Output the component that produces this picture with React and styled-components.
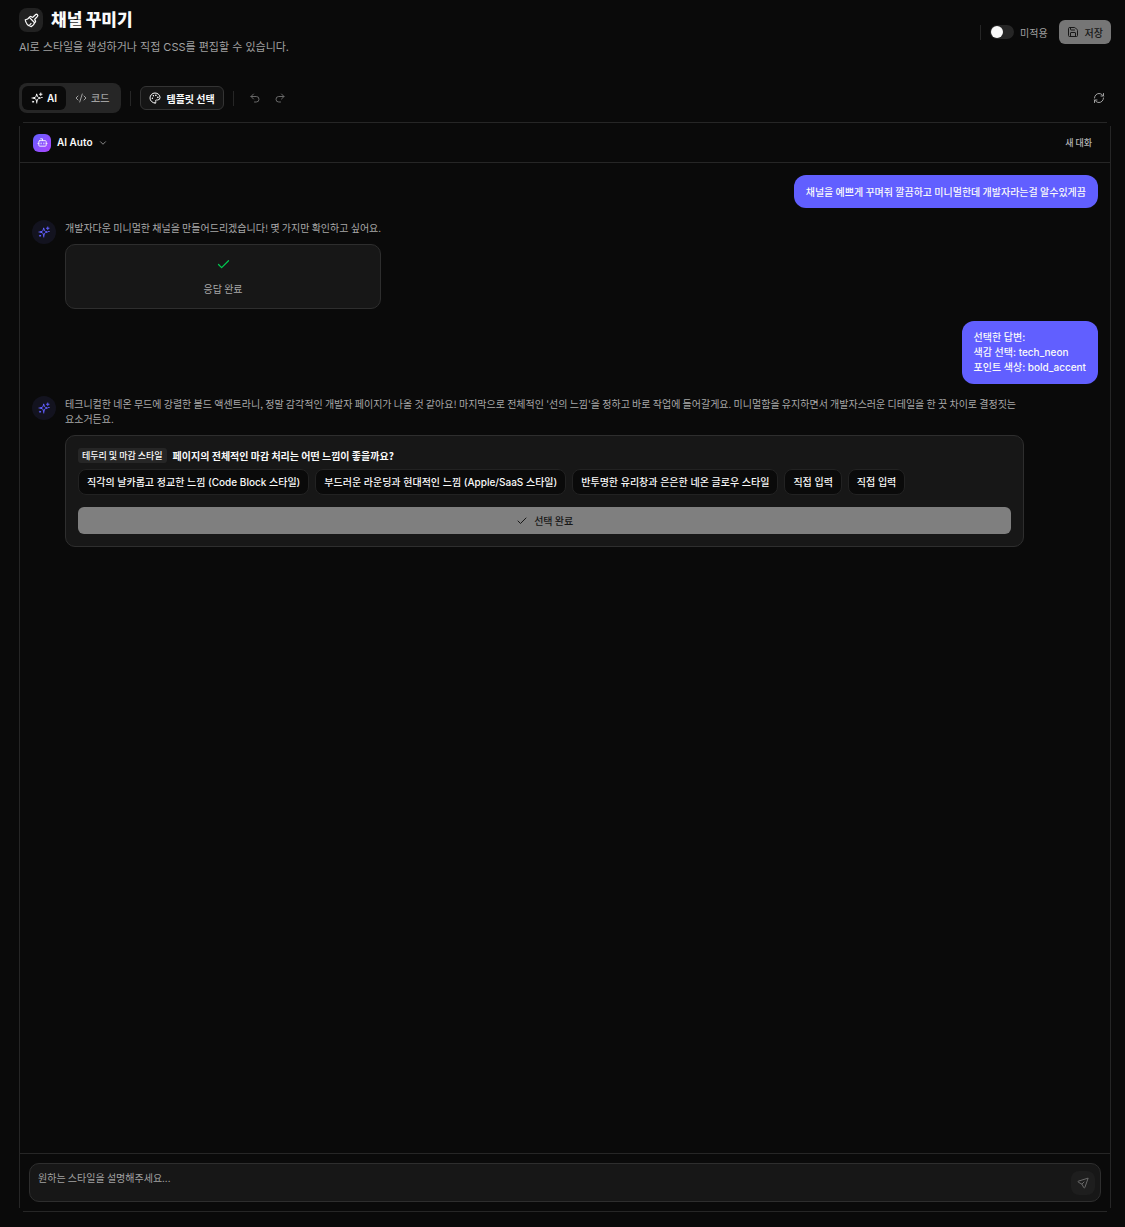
import styled, { createGlobalStyle, css } from "styled-components";
import {
  Bot,
  Check,
  ChevronDown,
  CodeXml,
  Palette,
  Redo2,
  RefreshCw,
  Save,
  Undo2,
} from "lucide-react";

const latinFont = `Inter, "Noto Sans CJK KR", sans-serif`;

const GlobalStyle = createGlobalStyle`
  * {
    box-sizing: border-box;
  }

  body {
    margin: 0;
    background-color: #0a0a0a;
    color: #fafafa;
    font-family: "Noto Sans CJK KR", sans-serif;
    font-size: 10px;
    line-height: 15px;
  }

  button,
  textarea {
    font: inherit;
    color: inherit;
  }

  h1,
  p {
    margin: 0;
  }
`;

const Page = styled.main`
  min-height: 100vh;
  padding: 8px 14px 15px 19px;
  display: flex;
  flex-direction: column;
`;

const Header = styled.header`
  height: 48px;
  margin-bottom: 27px;
  display: flex;
  align-items: center;
  justify-content: space-between;
`;

const TitleRow = styled.div`
  display: flex;
  align-items: center;
  gap: 8px;
`;

const TitleIcon = styled.span`
  width: 24px;
  height: 24px;
  border-radius: 8px;
  background-color: #222222;
  display: flex;
  align-items: center;
  justify-content: center;
`;

const Title = styled.h1`
  font-family: ${latinFont};
  font-size: 17px;
  line-height: 24px;
  font-weight: 900;
`;

const Subtitle = styled.p`
  margin-top: 6px;
  font-family: ${latinFont};
  font-size: 11px;
  line-height: 18px;
  color: #a1a1a1;
`;

const Row = styled.div`
  display: flex;
  align-items: center;
  gap: ${({ $gap }) => $gap || "9px"};
`;

const Divider = styled.span`
  width: 1px;
  height: 15px;
  background-color: #262626;
`;

const Switch = styled.label`
  display: flex;
  align-items: center;
  gap: 6px;
  margin-right: 2px;
  color: #a1a1a1;
  cursor: pointer;
`;

const SwitchInput = styled.input`
  appearance: none;
  width: 24px;
  height: 14px;
  margin: 0;
  padding: 1px;
  border-radius: 7px;
  background-color: #262626;
  display: flex;
  cursor: pointer;

  &::before {
    content: "";
    width: 12px;
    height: 12px;
    border-radius: 50%;
    background-color: #fafafa;
  }

  &:checked {
    justify-content: flex-end;
    background-color: #615fff;
  }
`;

const Button = styled.button`
  border: 0;
  padding: 0 9px;
  border-radius: 6px;
  background-color: transparent;
  display: flex;
  align-items: center;
  justify-content: center;
  gap: 6px;
  cursor: pointer;
`;

const SaveButton = styled(Button)`
  height: 24px;
  padding: 0 8px;
  background-color: #767676;
  color: #171717;
  font-weight: 500;
`;

const Toolbar = styled.div`
  height: 30px;
  margin-bottom: 9px;
  display: flex;
  align-items: center;
  justify-content: space-between;
`;

const Tabs = styled.div`
  height: 30px;
  padding: 3px;
  border-radius: 8px;
  background-color: #262626;
  display: flex;
`;

const Tab = styled(Button)`
  gap: 4px;
  font-family: ${latinFont};
  font-weight: 500;
  color: #a1a1a1;

  ${({ $active }) =>
    $active &&
    css`
      background-color: #0a0a0a;
      color: #fafafa;
      font-weight: 600;
    `}
`;

const TemplateButton = styled(Button)`
  height: 24px;
  padding: 0 8px;
  border: 1px solid #343434;
  background-color: #151515;
  gap: 5px;
  font-weight: 600;
`;

const IconButton = styled(Button)`
  width: 24px;
  height: 24px;
  padding: 0;
  color: ${({ $color }) => $color || "#6a6a6a"};
`;

/* the edge lines stop short of the corners */
const Panel = styled.section`
  flex: 1;
  padding: 1px;
  display: flex;
  flex-direction: column;
  background-image: linear-gradient(#262626, #262626),
    linear-gradient(#262626, #262626), linear-gradient(#262626, #262626),
    linear-gradient(#262626, #262626);
  background-repeat: no-repeat;
  background-size: calc(100% - 8px) 1px, calc(100% - 8px) 1px,
    1px calc(100% - 8px), 1px calc(100% - 8px);
  background-position: center top, center bottom, left center, right center;
`;

const PanelHeader = styled.div`
  height: 40px;
  padding: 0 9px 0 13px;
  border-bottom: 1px solid #262626;
  display: flex;
  align-items: center;
  justify-content: space-between;
`;

const ModelButton = styled(Button)`
  padding: 0;
  font-family: ${latinFont};
  font-weight: 600;
`;

const ModelIcon = styled.span`
  width: 18px;
  height: 18px;
  border-radius: 6px;
  background: linear-gradient(135deg, #615fff, #ad46ff);
  display: flex;
  align-items: center;
  justify-content: center;
`;

const NewChat = styled(Button)`
  height: 21px;
  font-size: 9px;
  font-weight: 500;
  color: #b4b4b4;
`;

const Messages = styled.div`
  flex: 1;
  padding: 12px;
  display: flex;
  flex-direction: column;
  gap: 12px;
`;

const Bubble = styled.div`
  align-self: flex-end;
  padding: 9px 12px;
  border-radius: 12px;
  background-color: #615fff;
  font-weight: 500;
  white-space: pre-line;
  ${({ $latin }) => $latin && `font-family: ${latinFont};`}
`;

const Reply = styled.div`
  display: flex;
  align-items: flex-start;
  gap: 9px;
`;

const Avatar = styled.span`
  width: 24px;
  height: 24px;
  flex-shrink: 0;
  border-radius: 50%;
  background-color: #13131f;
  color: #615fff;
  display: flex;
  align-items: center;
  justify-content: center;
`;

const ReplyBody = styled.div`
  max-width: 90%;
  display: flex;
  flex-direction: column;
  gap: 9px;
  color: #a8a8a8;
  word-break: keep-all;
`;

const Card = styled.div`
  padding: 12px;
  border: 1px solid #2e2e2e;
  border-radius: 10px;
  background-color: #171717;
`;

const DoneCard = styled(Card)`
  display: flex;
  flex-direction: column;
  align-items: center;
  gap: 9px;
`;

const Question = styled.p`
  display: flex;
  align-items: center;
  gap: 6px;
  color: #fafafa;
  font-weight: 600;
`;

const Tag = styled.span`
  padding: 0 4px;
  border-radius: 3px;
  background-color: #262626;
  font-size: 9px;
  font-weight: 500;
`;

const Options = styled.div`
  margin: 6px 0 12px;
  display: flex;
  flex-wrap: wrap;
  gap: 6px;
`;

const Option = styled(Button)`
  height: 26px;
  padding: 0 8px;
  border: 1px solid #222222;
  border-radius: 8px;
  background-color: #0a0a0a;
  color: #fafafa;
  font-family: ${latinFont};
  font-weight: 500;
`;

const Submit = styled(Button)`
  width: 100%;
  height: 27px;
  background-color: #7f7f7f;
  color: #171717;
  font-weight: 500;
`;

const Composer = styled.form`
  padding: 9px;
  border-top: 1px solid #262626;
`;

const Field = styled.div`
  height: 39px;
  padding: 0 5px 0 8px;
  border: 1px solid #2e2e2e;
  border-radius: 10px;
  background-color: #171717;
  display: flex;
  align-items: center;
`;

const Prompt = styled.textarea`
  flex: 1;
  height: 25px;
  padding: 0;
  border: 0;
  outline: 0;
  resize: none;
  overflow: hidden;
  background-color: transparent;

  &::placeholder {
    color: #a1a1a1;
  }
`;

const SendButton = styled(IconButton)`
  border-radius: 8px;
  background-color: #1e1e1e;
`;

const Glyph = ({ size = 12, stroke = 2, children }) => (
  <svg
    width={size}
    height={size}
    viewBox="0 0 24 24"
    fill="none"
    stroke="currentColor"
    strokeWidth={stroke}
    strokeLinecap="round"
    strokeLinejoin="round"
    aria-hidden="true"
  >
    {children}
  </svg>
);

const SparkIcon = () => (
  <Glyph>
    <path d="M11.500 4.500 13 9a2.500 2.500 0 0 0 1.500 1.500L19 12l-4.500 1.500A2.500 2.500 0 0 0 13 15l-1.500 4.500L10 15a2.500 2.500 0 0 0-1.500-1.500L4 12l4.500-1.500A2.500 2.500 0 0 0 10 9Z" />
    <path d="M11.500 19.500V22M2 12h2M19.500 2v5M17 4.500h5" />
    <circle cx="4" cy="19.500" r="1.200" />
    <circle cx="21.500" cy="11" r="0.400" />
  </Glyph>
);

const BrushIcon = () => (
  <Glyph size={15}>
    <path d="m14.500 6.500 4.300-4a2 2 0 0 1 2.800 2.800l-4 4.300a1.500 1.500 0 0 0 0 2l.6.7a1.500 1.500 0 0 1 0 2l-1.200 1.200-8.500-8.500 1.200-1.200a1.500 1.500 0 0 1 2 0l.8.7a1.500 1.500 0 0 0 2 0Z" />
    <path d="M8.500 7C7 9.500 4.500 10.500 2 10.800c.8 5.500 4 9.500 9.500 11 3-1.500 5-4 5.500-6.300" />
    <path d="M7 20c1.800-.4 3.200-1.500 4.200-3.200" />
  </Glyph>
);

const SendIcon = () => (
  <Glyph>
    <path d="M21.500 2.500 2.800 8.300c-1 .3-1 1.700 0 2.200l7 3.700 3.700 7c.5 1 1.900 1 2.200 0Z" />
    <path d="m10 14 4-4" />
  </Glyph>
);

const options = [
  "직각의 날카롭고 정교한 느낌 (Code Block 스타일)",
  "부드러운 라운딩과 현대적인 느낌 (Apple/SaaS 스타일)",
  "반투명한 유리창과 은은한 네온 글로우 스타일",
  "직접 입력",
  "직접 입력",
];

const App = () => {
  return (
    <>
      <GlobalStyle />
      <Page>
        <Header>
          <div>
            <TitleRow>
              <TitleIcon>
                <BrushIcon />
              </TitleIcon>
              <Title>채널 꾸미기</Title>
            </TitleRow>
            <Subtitle>
              AI로 스타일을 생성하거나 직접 CSS를 편집할 수 있습니다.
            </Subtitle>
          </div>

          <Row>
            <Divider />
            <Switch>
              <SwitchInput type="checkbox" role="switch" />
              미적용
            </Switch>
            <SaveButton type="button">
              <Save size={12} />
              저장
            </SaveButton>
          </Row>
        </Header>

        <Toolbar>
          <Row>
            <Tabs>
              <Tab type="button" $active>
                <SparkIcon />
                AI
              </Tab>
              <Tab type="button">
                <CodeXml size={12} />
                코드
              </Tab>
            </Tabs>
            <Divider />
            <TemplateButton type="button">
              <Palette size={12} />
              템플릿 선택
            </TemplateButton>
            <Divider />
            <Row $gap="1px">
              <IconButton type="button" aria-label="실행 취소">
                <Undo2 size={12} />
              </IconButton>
              <IconButton type="button" aria-label="다시 실행">
                <Redo2 size={12} />
              </IconButton>
            </Row>
          </Row>
          <IconButton type="button" $color="#a1a1a1" aria-label="새로고침">
            <RefreshCw size={12} />
          </IconButton>
        </Toolbar>

        <Panel>
          <PanelHeader>
            <ModelButton type="button">
              <ModelIcon>
                <Bot size={11} />
              </ModelIcon>
              AI Auto
              <ChevronDown size={10} color="#a1a1a1" />
            </ModelButton>
            <NewChat type="button">새 대화</NewChat>
          </PanelHeader>

          <Messages>
            <Bubble>
              채널을 예쁘게 꾸며줘 깔끔하고 미니멀한데 개발자라는걸 알수있게끔
            </Bubble>

            <Reply>
              <Avatar>
                <SparkIcon />
              </Avatar>
              <ReplyBody>
                <p>
                  개발자다운 미니멀한 채널을 만들어드리겠습니다! 몇 가지만
                  확인하고 싶어요.
                </p>
                <DoneCard>
                  <Check size={15} color="#00c950" />
                  <p>응답 완료</p>
                </DoneCard>
              </ReplyBody>
            </Reply>

            <Bubble $latin>
              {"선택한 답변:\n색감 선택: tech_neon\n포인트 색상: bold_accent"}
            </Bubble>

            <Reply>
              <Avatar>
                <SparkIcon />
              </Avatar>
              <ReplyBody>
                <p>
                  테크니컬한 네온 무드에 강렬한 볼드 액센트라니, 정말 감각적인
                  개발자 페이지가 나올 것 같아요! 마지막으로 전체적인 '선의
                  느낌'을 정하고 바로 작업에 들어갈게요. 미니멀함을 유지하면서
                  개발자스러운 디테일을 한 끗 차이로 결정짓는 요소거든요.
                </p>
                <Card>
                  <Question>
                    <Tag>테두리 및 마감 스타일</Tag>
                    페이지의 전체적인 마감 처리는 어떤 느낌이 좋을까요?
                  </Question>
                  <Options>
                    {options.map((option, index) => (
                      <Option key={index} type="button">
                        {option}
                      </Option>
                    ))}
                  </Options>
                  <Submit type="button">
                    <Check size={12} />
                    선택 완료
                  </Submit>
                </Card>
              </ReplyBody>
            </Reply>
          </Messages>

          <Composer>
            <Field>
              <Prompt
                aria-label="스타일 설명"
                placeholder="원하는 스타일을 설명해주세요..."
              />
              <SendButton type="button" aria-label="보내기">
                <SendIcon />
              </SendButton>
            </Field>
          </Composer>
        </Panel>
      </Page>
    </>
  );
};

export default App;
